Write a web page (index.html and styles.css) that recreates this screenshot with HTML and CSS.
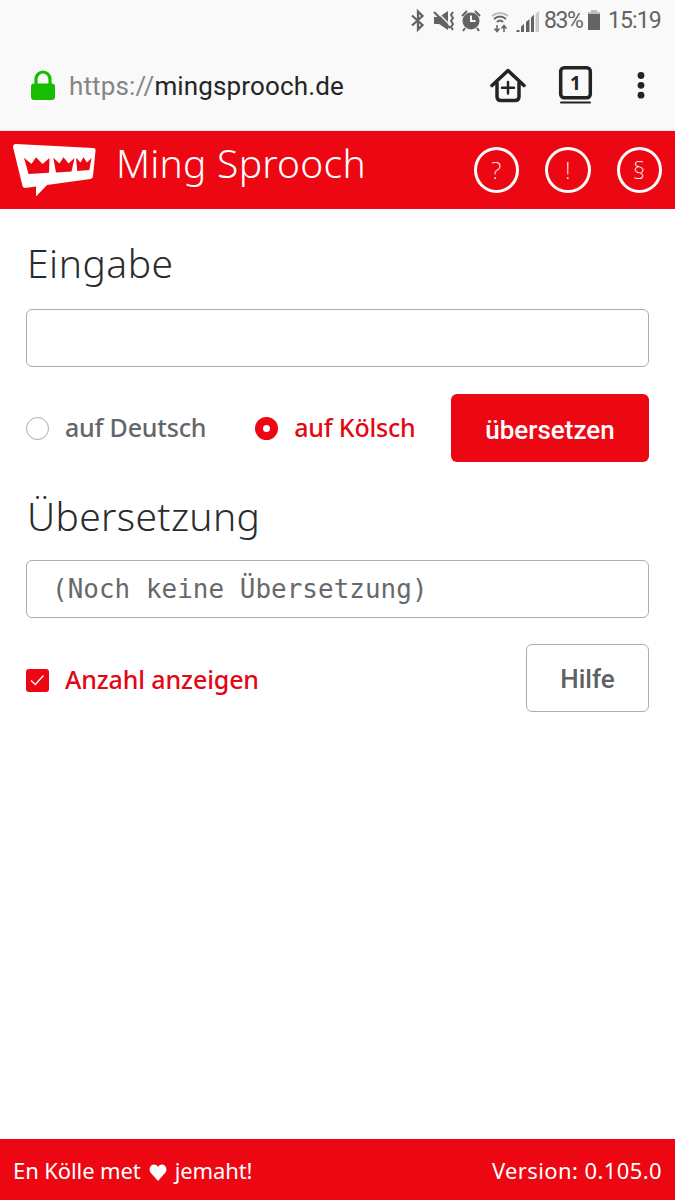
FILE: index.html
```html
<!DOCTYPE html>
<html lang="de">
<head>
<meta charset="utf-8">
<title>Ming Sprooch</title>
<link rel="stylesheet" href="styles.css">
</head>
<body>
<div class="screen">
  <div class="status">
    <svg class="status-icons" width="132" height="28" viewBox="0 0 132 28" fill="none" stroke="#636363" stroke-width="2">
      <path d="M2 9.500L12.500 19L8 23.500V5.500L12.500 10L2 19.500" stroke-width="2.300"/>
      <path d="M24 11h5l9-6v19l-9-6h-5z" fill="#636363" stroke="none"/>
      <path d="M25 4L42 21" stroke="#f9f9f9" stroke-width="1.500"/>
      <path d="M24 6L40 22" stroke-width="2.200"/>
      <path d="M43 6l-2 3 2 3-2 3 2 3-2 3 2 3" stroke-width="2"/>
      <circle cx="61" cy="15" r="8.500" fill="#636363" stroke="none"/>
      <path d="M52 10l5-5M70 10l-5-5M55 22l-2 3M67 22l2 3"/>
      <path d="M61 9.500V15h4.500" stroke="#f9f9f9"/>
      <path d="M82 10q8-6 16 0" stroke="#bdbdbd"/>
      <path d="M84 13q6-5 12 0M87 16q3-3 6 0"/>
      <path d="M87 19v6M84.500 22.500l2.500 3 2.500-3M94 26v-6M91.500 22.500l2.500-3 2.500 3" stroke-width="1.500"/>
      <g fill="#636363" stroke="none"><path d="M107 24h2.500v2H106zM111 20.500l3-2.500V26h-3zM116 16l3.500-3V26H116zM121 11.500l3-3V26h-3z"/><path d="M125.500 8l3.500-3v21h-3.500z" fill="#c9c9c9"/></g>
    </svg>
    <span class="percent">83%</span>
    <svg class="battery" width="14" height="22" viewBox="0 0 14 22"><path d="M4 1h6v2h3v3H1V3h3z" fill="#bdbdbd"/><path d="M1 5h12v16H1z" fill="#636363"/></svg>
    <span class="clock">15:19</span>
  </div>

  <div class="browser">
    <svg class="lock" width="24" height="32" viewBox="0 0 24 32"><rect y="13.500" width="24" height="16.500" rx="3" fill="#16bd00"/><path d="M5 16V9a7 7 0 0 1 14 0v7" fill="none" stroke="#16bd00" stroke-width="3.200"/></svg>
    <div class="url"><span class="scheme">https://</span>mingsprooch.de</div>
    <svg class="tools" width="160" height="44" viewBox="0 0 160 44" fill="none" stroke="#242424" stroke-width="3.500" stroke-linecap="round" stroke-linejoin="round">
      <path d="M3 21.500L19 6.500l16 15"/>
      <path d="M8 19v13.500q0 4 4 4h14q4 0 4-4V19"/>
      <path d="M19 18v11.500M13 23.800h12" stroke-width="2.500"/>
      <rect x="71.700" y="3.700" width="29.600" height="30" rx="3.500"/>
      <path d="M72 38.500h29" stroke-width="2"/>
      <g fill="#242424" stroke="none"><circle cx="152" cy="11.500" r="3.400"/><circle cx="152" cy="21.300" r="3.400"/><circle cx="152" cy="31.200" r="3.400"/>
      <text x="86.500" y="26" text-anchor="middle" class="tabs">1</text></g>
    </svg>
  </div>

  <header class="header">
    <svg class="logo" width="84" height="54" viewBox="0 0 84 54">
      <path d="M3 1L80 5Q83 5 82.500 8L80 33Q80 35.500 77.500 36L34 42L23 53.500V43.500L12 45Q10 45 9.500 43L0 4Q0 1 3 1Z" fill="#fff"/>
      <path d="M11 14.700L18.500 21 23 14.200 29.500 21 36.500 15 36 29.700 15.500 31zM40.300 14.700L46.500 20.500 50.500 14.200 55.500 20.500 61.500 15 58.500 28.500 43 29.500zM63 14.700L67.500 19.500 70.500 14.200 74 19.500 78.500 15 76.300 27 64.300 28z" fill="#ec0712"/>
    </svg>
    <h1 class="title">Ming Sprooch</h1>
    <nav class="nav"><a class="round">?</a><a class="round">!</a><a class="round">§</a></nav>
  </header>

  <main class="main">
    <h2 class="heading eingabe">Eingabe</h2>
    <div class="field"></div>
    <div class="options">
      <label class="choice"><span class="radio"></span><span>auf Deutsch</span></label>
      <label class="choice active koelsch"><span class="radio checked"></span><span>auf Kölsch</span></label>
      <button class="button primary">übersetzen</button>
    </div>
    <h2 class="heading uebersetzung">Übersetzung</h2>
    <div class="field result">(Noch keine Übersetzung)</div>
    <div class="actions">
      <label class="choice active anzahl"><svg class="check" width="23" height="23" viewBox="0 0 23 23"><rect width="23" height="23" rx="3" fill="#ec0712"/><path d="M5 11.500l4.300 4L17.500 6.500" fill="none" stroke="#fff" stroke-width="1.300"/></svg><span>Anzahl anzeigen</span></label>
      <button class="button help">Hilfe</button>
    </div>
  </main>

  <footer class="footer">
    <div class="made"><span>En Kölle met</span><svg class="heart" width="18" height="17" viewBox="0 0 18 17"><path d="M9 17L1.500 8.500C-2 3 5-3 9 3C13-3 20 3 16.500 8.500Z" fill="#fff"/></svg><span>jemaht!</span></div>
    <span class="version">Version: 0.105.0</span>
  </footer>
</div>
</body>
</html>
```
FILE: styles.css
```css
* { box-sizing: border-box; }
body { margin: 0; background: #fff; font-family: "Noto Sans", sans-serif; }
.screen { width: 675px; height: 1200px; display: flex; flex-direction: column; overflow: hidden; }
.status { height: 42px; background: #f9f9f9; display: flex; align-items: center; justify-content: flex-end; padding-right: 14px; font: 23px/42px Roboto, sans-serif; color: #636363; white-space: nowrap; }
.status-icons { margin-right: 2px; margin-top: -3px; }
.percent { width: 43px; letter-spacing: -1.4px; }
.battery { margin-right: 7px; margin-top: -2px; }
.clock { width: 53px; letter-spacing: -.9px; }
.browser { height: 89px; background: #f9f9f9; border-bottom: 1px solid #e4edf2; display: flex; align-items: flex-start; padding: 22px 0 0 31px; }
.lock { margin-top: 6px; }
.url { font: 26px/44px Roboto, sans-serif; color: #252525; margin-left: 14px; width: 400px; letter-spacing: .14px; }
.scheme { color: #858585; }
.tools { margin-left: 20px; }
.tabs { font: bold 19px "Noto Sans", sans-serif; }
.header { height: 78px; background: #ec0712; display: flex; align-items: flex-start; padding: 12px 13px 0; color: #fff; }
.title { margin: -7px 0 0 19px; font-size: 39px; line-height: 54px; font-weight: 300; letter-spacing: .25px; white-space: nowrap; }
.nav { margin: 4px 0 0 auto; display: flex; gap: 26px; }
.round { width: 45.500px; height: 46px; border: 3px solid #fff; border-radius: 50%; font-size: 24px; font-weight: 200; line-height: 39px; text-align: center; }
.main { flex: 1; padding: 27px 26px 0; }
.heading { margin: 0; padding-left: 1px; font-size: 39px; line-height: 54px; font-weight: 300; color: #292b2c; }
.eingabe { letter-spacing: .5px; }
.field { height: 58px; margin-top: 19px; border: 1px solid #adadad; border-radius: 6px; }
.options { height: 68px; margin-top: 27px; display: flex; align-items: center; font-size: 25px; }
.choice { display: flex; align-items: center; color: #63666a; font-size: 25px; font-weight: 500; line-height: 34px; letter-spacing: -.2px; white-space: nowrap; }
.choice span:last-child { padding-bottom: 2px; }
.active { color: #e30613; }
.radio { width: 23px; height: 23px; margin-right: 16px; border: 1px solid #aaa; border-radius: 50%; }
.checked { border: 8.500px solid #ec0712; }
.koelsch { margin-left: 49px; }
.button { margin-left: auto; height: 68px; border-radius: 6px; border: 0; font: 500 26px/68px Roboto, sans-serif; padding: 2px 0 0; }
.primary { width: 198px; background: #ec0712; color: #fff; }
.uebersetzung { margin-top: 27px; letter-spacing: .35px; }
.result { margin-top: 17px; padding-left: 25px; font: 25.900px/56px "DejaVu Sans Mono", monospace; color: #66696b; letter-spacing: .06px; }
.actions { margin-top: 26px; height: 68px; display: flex; align-items: center; }
.anzahl { padding-top: 4px; letter-spacing: -.12px; }
.check { margin-right: 16px; }
.help { width: 123px; border: 1px solid #adadad; background: #fff; color: #5f6163; line-height: 64px; }
.footer { height: 61px; background: #ec0712; color: #fff; display: flex; align-items: center; justify-content: space-between; padding: 1px 13px 0; font-size: 22px; }
.made { display: flex; align-items: center; gap: 8px; letter-spacing: -.1px; }
.heart { margin-top: 4px; }
.version { letter-spacing: .4px; }
```
